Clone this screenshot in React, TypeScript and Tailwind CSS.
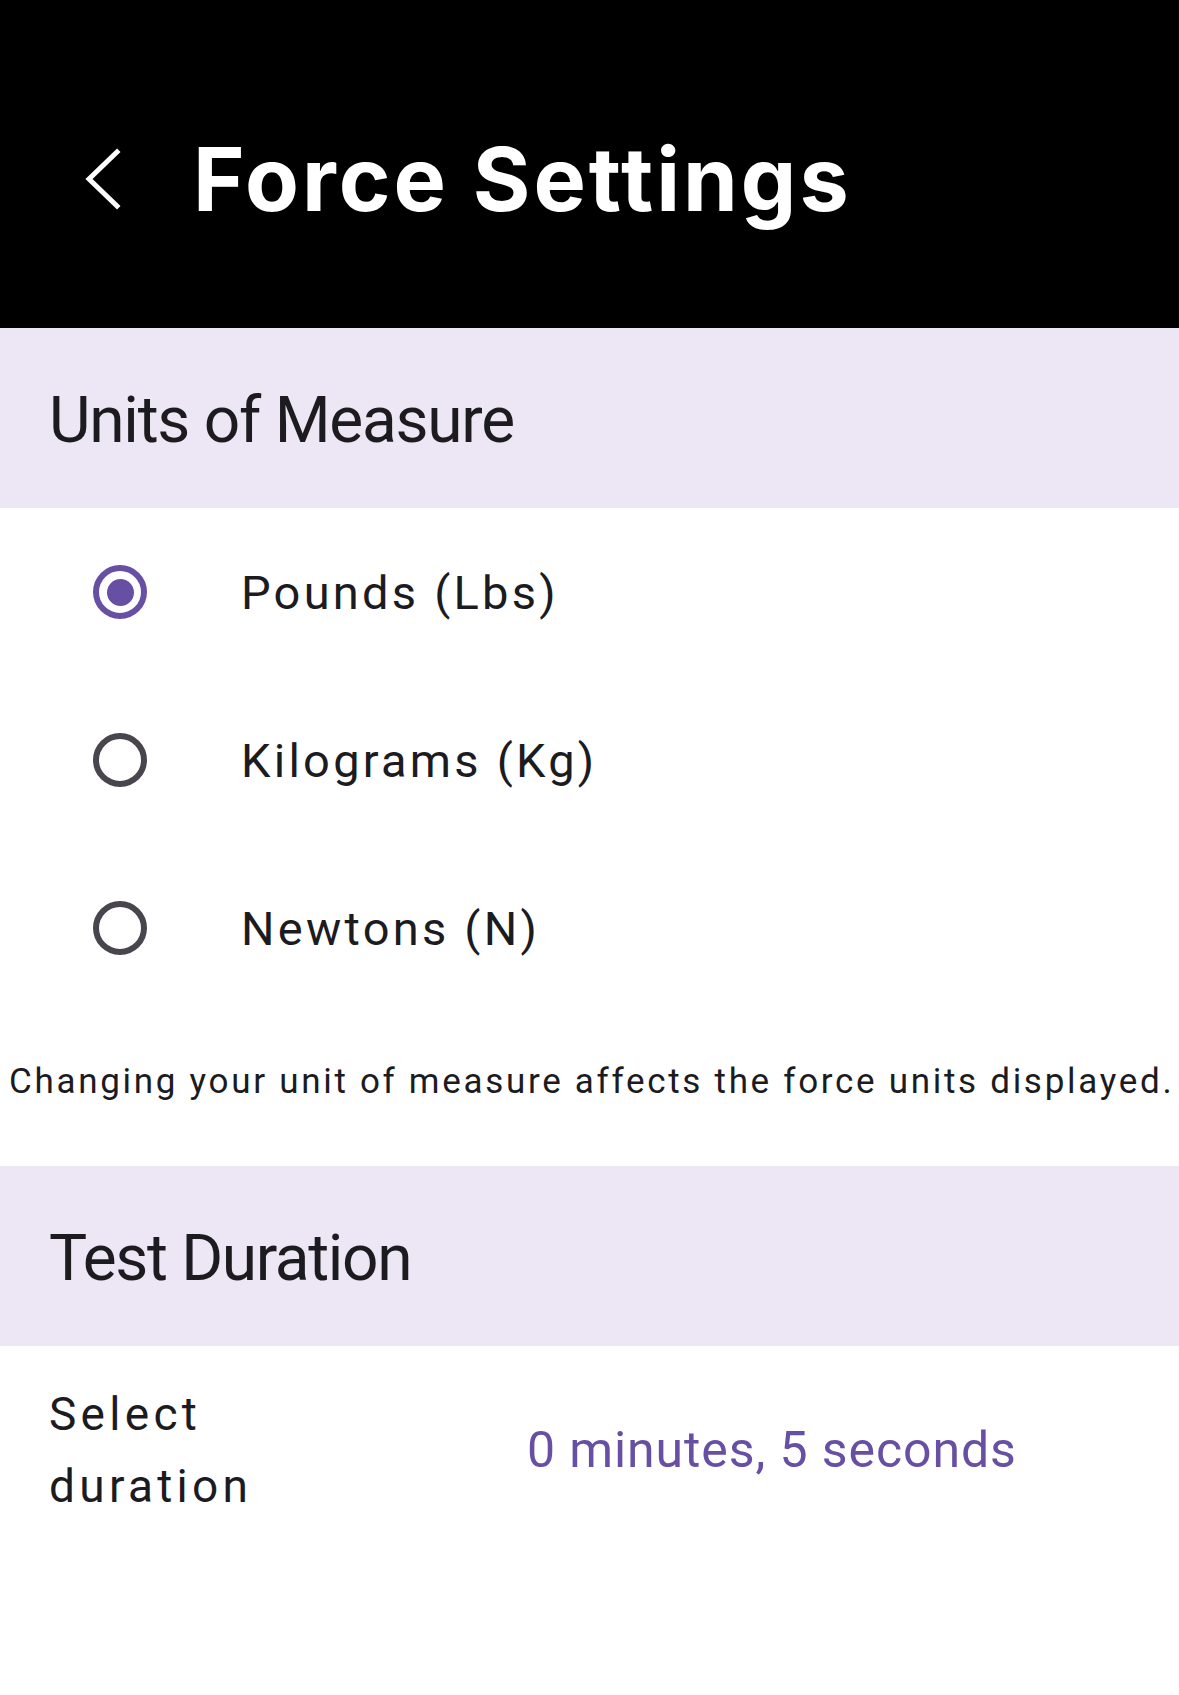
import { useState } from "react";

const units = ["Pounds (Lbs)", "Kilograms (Kg)", "Newtons (N)"];

function SectionHeader({ title, tracking }: { title: string; tracking: string }) {
  return (
    <div className="flex h-[180px] items-center bg-[#ece6f5] pl-[49px] pt-[6px]">
      <h2 className={`text-[64px] leading-none text-[#1c1b1f] ${tracking}`}>{title}</h2>
    </div>
  );
}

function Radio({ checked }: { checked: boolean }) {
  return (
    <span
      className={
        checked
          ? "flex h-[54px] w-[54px] items-center justify-center rounded-full border-[6px] border-[#6750a4]"
          : "flex h-[54px] w-[54px] items-center justify-center rounded-full border-[6px] border-[#49454f]"
      }
    >
      {checked && <span className="h-[27px] w-[27px] rounded-full bg-[#6750a4]" />}
    </span>
  );
}

export default function App() {
  const [unit, setUnit] = useState(0);

  return (
    <div className="min-h-[1695px] bg-white font-['Roboto',sans-serif] text-[#1c1b1f]">
      <header className="flex h-[328px] items-center bg-black pt-[30px] text-white">
        <button className="ml-[82px] flex h-[64px] w-[40px] items-center justify-center">
          <svg width="40" height="62" viewBox="0 0 40 62" fill="none">
            <path d="M35 4 L7 31 L35 58" stroke="white" strokeWidth="5" strokeLinecap="square" />
          </svg>
        </button>
        <h1 className="ml-[71px] font-['Inter',sans-serif] text-[88px] font-bold leading-none tracking-[3px]">
          Force Settings
        </h1>
      </header>

      <SectionHeader title="Units of Measure" tracking="tracking-[-1.25px]" />

      <div>
        {units.map((label, i) => (
          <button
            key={label}
            onClick={() => setUnit(i)}
            className="flex h-[168px] w-full items-center text-left"
          >
            <span className="ml-[93px]">
              <Radio checked={unit === i} />
            </span>
            <span className="ml-[94px] text-[47px] leading-none tracking-[3.25px]">{label}</span>
          </button>
        ))}
      </div>

      <p className="h-[154px] pl-[9px] pt-[52px] text-[35px] leading-none tracking-[2.7px] whitespace-nowrap">
        Changing your unit of measure affects the force units displayed.
      </p>

      <SectionHeader title="Test Duration" tracking="tracking-[-1.35px]" />

      <div className="grid grid-cols-[478px_1fr] items-center pl-[49px] pt-[32px]">
        <div className="max-w-[280px] text-[46px] leading-[72px] tracking-[4.3px]">Select duration</div>
        <div className="text-[50px] leading-none tracking-[0.9px] text-[#6750a4]">0 minutes, 5 seconds</div>
      </div>
    </div>
  );
}
